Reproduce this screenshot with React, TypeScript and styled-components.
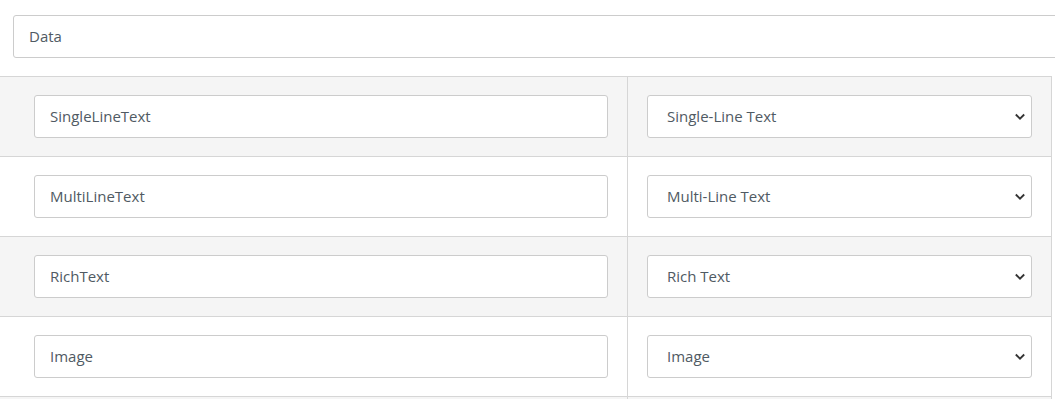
import React from 'react';
import styled, { createGlobalStyle } from 'styled-components';

const GlobalStyle = createGlobalStyle`
  html, body {
    margin: 0;
    padding: 0;
    background: #ffffff;
    overflow: hidden;
  }
  body {
    font-family: "Open Sans", "Liberation Sans", Arial, sans-serif;
  }
`;

const Page = styled.div`
  width: 1055px;
  height: 399px;
  overflow: hidden;
`;

const TitleBar = styled.div`
  padding: 15px 0 18px 13px;
`;

const TextField = styled.input<{ $width: number }>`
  box-sizing: border-box;
  display: block;
  width: ${(p) => p.$width}px;
  height: 43px;
  padding: 0 15px 2px;
  border: 1px solid #cccccc;
  border-radius: 3px;
  background: #ffffff;
  font-family: inherit;
  font-size: 15px;
  color: #505a63;
  outline: none;
`;

const Table = styled.div`
  width: 1052px;
  border-top: 1px solid #d6d6d6;
`;

const Row = styled.div<{ $striped: boolean }>`
  display: flex;
  background: ${(p) => (p.$striped ? '#f5f5f5' : '#ffffff')};
  border-bottom: 1px solid #d6d6d6;
`;

const NameCell = styled.div`
  box-sizing: border-box;
  width: 627px;
  padding: 18px 19px 18px 34px;
`;

const TypeCell = styled.div`
  box-sizing: border-box;
  width: 425px;
  padding: 18px 19px;
  border-left: 1px solid #d6d6d6;
  border-right: 1px solid #d6d6d6;
`;

const SelectWrap = styled.div`
  position: relative;
  width: 385px;
`;

const Select = styled.select`
  box-sizing: border-box;
  display: block;
  width: 100%;
  height: 43px;
  padding: 0 30px 2px 19px;
  border: 1px solid #cccccc;
  border-radius: 3px;
  background: #ffffff;
  font-family: inherit;
  font-size: 15px;
  color: #505a63;
  appearance: none;
  -webkit-appearance: none;
  outline: none;
`;

const Chevron = styled.svg`
  position: absolute;
  right: 6px;
  top: 18px;
  pointer-events: none;
`;

const fields = [
  { name: 'SingleLineText', type: 'Single-Line Text' },
  { name: 'MultiLineText', type: 'Multi-Line Text' },
  { name: 'RichText', type: 'Rich Text' },
  { name: 'Image', type: 'Image' },
  { name: 'Number', type: 'Number' },
];

const typeOptions = ['Single-Line Text', 'Multi-Line Text', 'Rich Text', 'Image', 'Number'];

export default function App() {
  return (
    <Page>
      <GlobalStyle />
      <TitleBar>
        <TextField $width={1080} defaultValue="Data" />
      </TitleBar>
      <Table>
        {fields.map((f, i) => (
          <Row key={f.name} $striped={i % 2 === 0}>
            <NameCell>
              <TextField $width={574} defaultValue={f.name} />
            </NameCell>
            <TypeCell>
              <SelectWrap>
                <Select defaultValue={f.type}>
                  {typeOptions.map((o) => (
                    <option key={o}>{o}</option>
                  ))}
                </Select>
                <Chevron width="12" height="8" viewBox="0 0 12 8">
                  <path d="M1.8 1.5 L6 5.7 L10.2 1.5" fill="none" stroke="#333" strokeWidth="1.8" />
                </Chevron>
              </SelectWrap>
            </TypeCell>
          </Row>
        ))}
      </Table>
    </Page>
  );
}
